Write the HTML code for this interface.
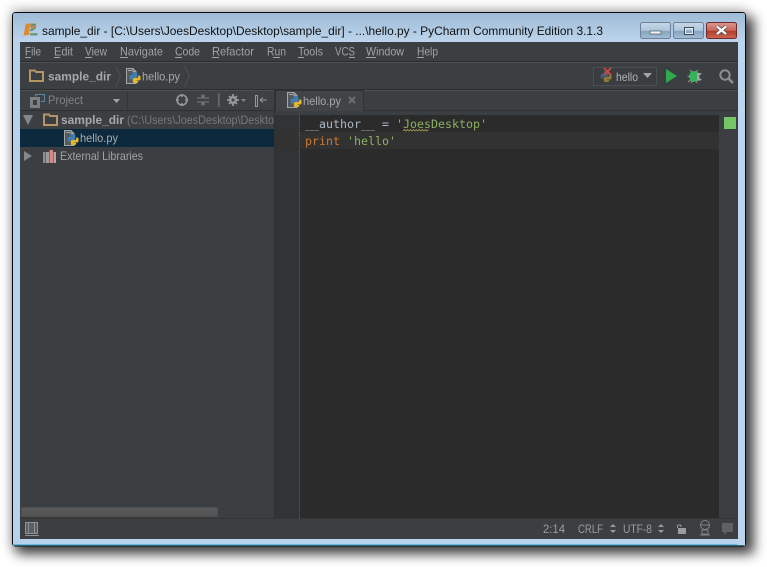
<!DOCTYPE html>
<html><head><meta charset="utf-8"><style>
html,body{margin:0;padding:0;background:#fff;width:767px;height:567px;overflow:hidden}
svg{display:block}
text{font-family:"Liberation Sans",sans-serif;font-size:12px;fill:#a0a3a6}
.m{font-family:"DejaVu Sans Mono",monospace;font-size:11.67px}
.b{font-weight:bold}
</style></head><body>
<svg width="767" height="567" viewBox="0 0 767 567" xmlns="http://www.w3.org/2000/svg">
<defs>
<filter id="sh" x="-10%" y="-10%" width="120%" height="120%"><feGaussianBlur stdDeviation="6"/></filter>
<linearGradient id="tb" x1="0" y1="0" x2="0" y2="1"><stop offset="0" stop-color="#9fbbd6"/><stop offset="1" stop-color="#bcd5ec"/></linearGradient>
<linearGradient id="btn" x1="0" y1="0" x2="0" y2="1"><stop offset="0" stop-color="#c6d8e9"/><stop offset=".5" stop-color="#aec6dc"/><stop offset=".55" stop-color="#86a4c0"/><stop offset="1" stop-color="#a3bdd4"/></linearGradient>
<linearGradient id="cl" x1="0" y1="0" x2="0" y2="1"><stop offset="0" stop-color="#dd9a90"/><stop offset=".5" stop-color="#c9645a"/><stop offset=".55" stop-color="#b23a2c"/><stop offset="1" stop-color="#cc6a55"/></linearGradient>
<linearGradient id="sc" x1="0" y1="0" x2="0" y2="1"><stop offset="0" stop-color="#5a5a5a"/><stop offset="1" stop-color="#525252"/></linearGradient>
<g id="pysnake">
<g transform="translate(1.500 1) scale(.82)">
<path d="M6 5.500C6 4 7 3.500 9 3.500S12 4 12 5.500V9C12 10 11.500 10.500 10.500 10.500H7.500C6.500 10.500 6 11 6 12V13H4.500C3 13 2.500 12 2.500 10S3 7 4.500 7H9V6.500H6Z" fill="#3f7fb5"/>
<path d="M13 8H14.500C15.500 8 16 9 16 11S15.500 14 14.500 14H10V14.500H13V16C13 17.500 6.500 17.500 6.500 16V12.500C6.500 11.500 7 11 8 11H11.500C12.500 11 13 10.500 13 9.500Z" fill="#e3b82c"/>
</g>
</g>
<g id="py">
<path d="M0.500 0.500H7L10 3.500V15.500H0.500Z" fill="#55585a" stroke="#a3a7aa"/>
<path d="M7 0.500V3.500H10" fill="none" stroke="#a3a7aa"/>
<rect x="2" y="2" width="4" height="1" fill="#a3a7aa"/>
<use href="#pysnake" x="0" y="0"/>
</g>
<g id="folder"><path d="M1 2.500H6L7 4H14V13H1Z" fill="none" stroke="#b59566" stroke-width="2"/></g>
</defs>

<!-- shadow -->
<rect x="16" y="17" width="738" height="537" fill="#000" opacity=".72" filter="url(#sh)"/>
<rect x="10" y="8" width="736" height="540" fill="#000" opacity=".18" filter="url(#sh)"/>

<!-- window frame -->
<rect x="12.500" y="12.500" width="733" height="533.500" rx="3" fill="#b7d2ec" stroke="#0a0a0a"/>
<path d="M13 15Q13 13 15 13H743Q745 13 745 15V42H13Z" fill="url(#tb)"/>
<rect x="13" y="42" width="732" height="497" fill="#b7d2ec"/>
<rect x="13" y="544" width="732" height="1.500" fill="#62bcdc"/>
<rect x="737.500" y="42" width="7.500" height="503" fill="#bcd6ee"/>
<rect x="13" y="41" width="7" height="503" fill="#b7d2ec"/>

<!-- app icon -->
<path d="M24 33L25.500 25Q26 23.500 28 23.500H30L29 35H25L23.500 36.500Z" fill="#dd8a2e"/>
<path d="M29 23.500H35Q37 24 36 27L34 29.500L30.500 30.500V27L32 26H30Z" fill="#c9913e"/>
<path d="M30.500 26.500Q34 24 36 24.500M30 30.500Q34 30 35.500 27" fill="none" stroke="#5f8d86" stroke-width="1.500"/>
<rect x="30" y="33" width="7.500" height="2.500" fill="#6f9c85"/>

<text x="42" y="35" textLength="561" lengthAdjust="spacingAndGlyphs" style="fill:#111">sample_dir - [C:\Users\JoesDesktop\Desktop\sample_dir] - ...\hello.py - PyCharm Community Edition 3.1.3</text>

<!-- window buttons -->
<rect x="640.500" y="22.500" width="30" height="16" rx="2" fill="url(#btn)" stroke="#6f8299"/>
<rect x="650" y="31" width="11" height="3" fill="#eef3f8" stroke="#4c5a68" stroke-width=".7"/>
<rect x="673.500" y="22.500" width="30" height="16" rx="2" fill="url(#btn)" stroke="#6f8299"/>
<rect x="684.500" y="27.500" width="9" height="7" fill="none" stroke="#3c4a58" stroke-width="1"/>
<rect x="685.500" y="28.500" width="7" height="5" fill="none" stroke="#e6edf4" stroke-width="1"/>
<rect x="706.500" y="22.500" width="30" height="16" rx="2" fill="url(#cl)" stroke="#6e2a2a"/>
<path d="M717 26.500L726 34M726 26.500L717 34" stroke="#4a4a4a" stroke-width="3.600"/>
<path d="M717 26.500L726 34M726 26.500L717 34" stroke="#fff" stroke-width="2.200"/>

<!-- app body -->
<rect x="20" y="42" width="718" height="497" fill="#3c3f41"/>
<rect x="20" y="61" width="718" height="1" fill="#2b2d2e"/>
<rect x="20" y="62" width="718" height="1" fill="#4d4f50"/>
<rect x="20" y="89" width="718" height="1" fill="#2b2d2e"/>
<rect x="20" y="90" width="718" height="1" fill="#4d4f50"/>

<!-- menu -->
<g>
<text x="25" y="55.500" textLength="16" lengthAdjust="spacingAndGlyphs">File</text><rect x="25" y="57" width="6" height="1" fill="#a0a3a6"/>
<text x="54" y="55.500" textLength="19" lengthAdjust="spacingAndGlyphs">Edit</text><rect x="54" y="57" width="6" height="1" fill="#a0a3a6"/>
<text x="85" y="55.500" textLength="22" lengthAdjust="spacingAndGlyphs">View</text><rect x="85" y="57" width="7" height="1" fill="#a0a3a6"/>
<text x="120" y="55.500" textLength="43" lengthAdjust="spacingAndGlyphs">Navigate</text><rect x="120" y="57" width="8" height="1" fill="#a0a3a6"/>
<text x="175" y="55.500" textLength="25" lengthAdjust="spacingAndGlyphs">Code</text><rect x="175" y="57" width="7" height="1" fill="#a0a3a6"/>
<text x="212" y="55.500" textLength="42" lengthAdjust="spacingAndGlyphs">Refactor</text><rect x="212" y="57" width="7" height="1" fill="#a0a3a6"/>
<text x="267" y="55.500" textLength="19" lengthAdjust="spacingAndGlyphs">Run</text><rect x="273" y="57" width="7" height="1" fill="#a0a3a6"/>
<text x="298" y="55.500" textLength="25" lengthAdjust="spacingAndGlyphs">Tools</text><rect x="298" y="57" width="6" height="1" fill="#a0a3a6"/>
<text x="335" y="55.500" textLength="20" lengthAdjust="spacingAndGlyphs">VCS</text><rect x="349" y="57" width="6" height="1" fill="#a0a3a6"/>
<text x="366" y="55.500" textLength="38" lengthAdjust="spacingAndGlyphs">Window</text><rect x="366" y="57" width="10" height="1" fill="#a0a3a6"/>
<text x="417" y="55.500" textLength="21" lengthAdjust="spacingAndGlyphs">Help</text><rect x="417" y="57" width="7" height="1" fill="#a0a3a6"/>
</g>

<!-- nav bar -->
<use href="#folder" x="29" y="68"/>
<text x="48" y="80.500" textLength="63" lengthAdjust="spacingAndGlyphs" class="b" style="fill:#a6a9ac">sample_dir</text>
<path d="M115.500 66L120.500 76L115.500 87" fill="none" stroke="#4c4f51"/>
<use href="#py" x="126" y="68"/>
<text x="142" y="80.500" textLength="38" lengthAdjust="spacingAndGlyphs" style="fill:#a6a9ac">hello.py</text>
<path d="M184.500 66L189.500 76L184.500 87" fill="none" stroke="#4c4f51"/>

<!-- run config -->
<rect x="593.500" y="67.500" width="63" height="18" fill="#3a3d3f" stroke="#4c4f51"/>
<g opacity=".5"><use href="#pysnake" x="597" y="67"/></g>
<path d="M604 68L611 75M611 68L604 75" stroke="#d14a3c" stroke-width="1.800"/>
<text x="616" y="81" textLength="22" lengthAdjust="spacingAndGlyphs" style="fill:#b0b3b6">hello</text>
<path d="M643 73H652L647.500 78Z" fill="#a3a6a9"/>
<path d="M666 69V83L677 76Z" fill="#2faa4c"/>
<ellipse cx="694" cy="76.500" rx="5" ry="5.500" fill="#35b356"/>
<path d="M690 70L692 72M698 70L696 72M687.500 76.500H690M688 82L690.500 80M691 83L692 81M697 83L696 81" stroke="#8a9a90" fill="none"/>
<path d="M697 72.500L702 73.500L700 75L699 76.500L700 78.500L702 80L697 81Z" fill="#a3a6a8"/>
<circle cx="725" cy="75" r="4.700" fill="none" stroke="#8c8f91" stroke-width="2"/>
<path d="M728.500 78.500L733 83" stroke="#8c8f91" stroke-width="2.500"/>

<!-- project tool header -->
<rect x="20" y="91" width="255" height="19" fill="#3e4143"/>
<rect x="20" y="110" width="255" height="1" fill="#2d2f30"/>
<rect x="30" y="97" width="10" height="11" fill="#7d8082"/>
<rect x="33" y="100" width="4" height="5" fill="#3c3f41"/>
<path d="M35.500 96.500V94.500H44.500V101.500H41" fill="none" stroke="#5887a6"/>
<text x="48" y="104" textLength="35" lengthAdjust="spacingAndGlyphs" style="fill:#808386">Project</text>
<path d="M113 99H120L116.500 103Z" fill="#a0a3a6"/>
<rect x="127" y="91" width="1" height="19" fill="#333537"/>
<circle cx="182" cy="100" r="5" fill="none" stroke="#95989b" stroke-width="1.600"/>
<path d="M182 94V97M182 103V106M176 100H179M185 100H188" stroke="#95989b" stroke-width="1.500"/>
<path d="M197 98H209M197 102H209M203 94V97L201 95.500M203 94V97L205 95.500M203 106V103L201 104.500M203 106V103L205 104.500" fill="none" stroke="#7c7f81"/>
<rect x="218" y="93" width="1.500" height="14" fill="#6a6d6f"/>
<circle cx="233" cy="100" r="4" fill="#95989b"/>
<path d="M233 94V106M227 100H239M229 96L237 104M237 96L229 104" stroke="#95989b" stroke-width="1.800"/>
<circle cx="233" cy="100" r="1.500" fill="#3e4143"/>
<path d="M241 99H246L243.500 102Z" fill="#808386"/>
<rect x="255.500" y="95.500" width="2" height="11" fill="none" stroke="#95989b"/>
<path d="M260 100H267M260 100L263 97.500M260 100L263 102.500" fill="none" stroke="#95989b"/>

<!-- tree -->
<rect x="20" y="111" width="254" height="407" fill="#3c3f41"/>
<rect x="20" y="129" width="254" height="18" fill="#0d293e"/>
<path d="M23 115H33L28 125Z" fill="#85888a"/>
<use href="#folder" x="43" y="112"/>
<text x="61" y="124" textLength="63" lengthAdjust="spacingAndGlyphs" class="b" style="fill:#a6a9ac">sample_dir</text>
<text x="127" y="124" textLength="147" lengthAdjust="spacingAndGlyphs" style="fill:#75787a">(C:\Users\JoesDesktop\Deskto</text>
<use href="#py" x="64" y="130"/>
<text x="80" y="142" textLength="38" lengthAdjust="spacingAndGlyphs" style="fill:#a9acaf">hello.py</text>
<path d="M24 151V161L32 156Z" fill="#85888a"/>
<rect x="43" y="152" width="2.500" height="11" fill="#8b8e90"/><rect x="46" y="152" width="3" height="11" fill="#9a9d9f"/>
<rect x="49.500" y="150" width="3.500" height="13" fill="#d98880"/><rect x="53.500" y="152" width="2.500" height="11" fill="#b5a5a5"/>
<text x="60" y="160" textLength="83" lengthAdjust="spacingAndGlyphs" style="fill:#a0a3a6">External Libraries</text>

<!-- scrollbar -->
<rect x="21.500" y="507.500" width="196" height="9" rx="1" fill="url(#sc)" stroke="#4e4e4e"/>

<!-- divider -->
<rect x="274" y="90" width="1" height="428" fill="#2e3031"/>

<!-- tab bar -->
<rect x="275" y="91" width="463" height="20" fill="#3c3f41"/>
<rect x="275" y="110" width="463" height="1" fill="#2f3132"/>
<path d="M275.500 111V90.500H363.500V111" fill="#45484a" stroke="#2f3132"/>
<rect x="276" y="91" width="87" height="20" fill="#414446"/>
<use href="#py" x="287" y="92"/>
<text x="303" y="105" textLength="38" lengthAdjust="spacingAndGlyphs" style="fill:#a6a9ac">hello.py</text>
<path d="M349 97L355 103M355 97L349 103" stroke="#6b6e70" stroke-width="2"/>

<!-- editor -->
<rect x="275" y="111" width="463" height="407" fill="#3c3f41"/>
<rect x="275" y="115" width="25" height="403" fill="#313335"/>
<rect x="300" y="115" width="419" height="403" fill="#2b2b2b"/>
<rect x="275" y="132" width="444" height="17" fill="#323232"/>
<line x1="299.500" y1="115" x2="299.500" y2="518" stroke="#5a5c5e" stroke-dasharray="1 1"/>
<text x="305" y="128" class="m" textLength="70" lengthAdjust="spacingAndGlyphs" style="fill:#a9b7c6">__author__</text>
<text x="382" y="128" class="m" style="fill:#a9b7c6">=</text>
<text x="396" y="128" class="m" textLength="91" lengthAdjust="spacingAndGlyphs" style="fill:#8bb063">'JoesDesktop'</text>
<path d="M403 131l1.500-1.500 1.500 1.500 1.500-1.500 1.500 1.500 1.500-1.500 1.500 1.500 1.500-1.500 1.500 1.500 1.500-1.500 1.500 1.500 1.500-1.500 1.500 1.500 1.500-1.500 1.500 1.500 1.500-1.500 1.500 1.500 1.500-1.500" fill="none" stroke="#a69a4e" stroke-width=".8"/>
<text x="305" y="145" class="m" textLength="35" lengthAdjust="spacingAndGlyphs" style="fill:#cc7832">print</text>
<text x="347" y="145" class="m" textLength="49" lengthAdjust="spacingAndGlyphs" style="fill:#8bb063">'hello'</text>

<!-- green marker -->
<rect x="724" y="117" width="12" height="12" fill="#73c665"/>

<!-- status bar -->
<rect x="20" y="518" width="718" height="21" fill="#3c3f41"/>
<rect x="20" y="518" width="718" height="1" fill="#333537"/>
<rect x="25.500" y="522.500" width="12" height="11" fill="#5c5f61" stroke="#909396"/>
<path d="M28.500 523V533M34.500 523V533" stroke="#909396"/>
<rect x="25" y="535" width="14" height="1" fill="#909396"/>
<text x="543" y="533" textLength="22" lengthAdjust="spacingAndGlyphs" style="fill:#9a9da0">2:14</text>
<text x="578" y="533" textLength="25" lengthAdjust="spacingAndGlyphs" style="fill:#9a9da0">CRLF</text>
<path d="M610 527L613 524L616 527ZM610 530L613 533L616 530Z" fill="#9a9da0"/>
<text x="623" y="533" textLength="29" lengthAdjust="spacingAndGlyphs" style="fill:#9a9da0">UTF-8</text>
<path d="M658 527L661 524L664 527ZM658 530L661 533L664 530Z" fill="#9a9da0"/>
<rect x="678" y="528" width="8" height="6" fill="#9a9da0"/>
<path d="M677.500 528V526Q677.500 525 679 525H680Q681 525 681 527" fill="none" stroke="#9a9da0"/>
<circle cx="705" cy="525" r="4.500" fill="none" stroke="#808386"/>
<path d="M700 525H710M702 530H708V534H702ZM700 535H710" fill="none" stroke="#808386"/>
<path d="M722 523H733V532H727L724 535V532H722Z" fill="#5f6264"/>
</svg>
</body></html>
